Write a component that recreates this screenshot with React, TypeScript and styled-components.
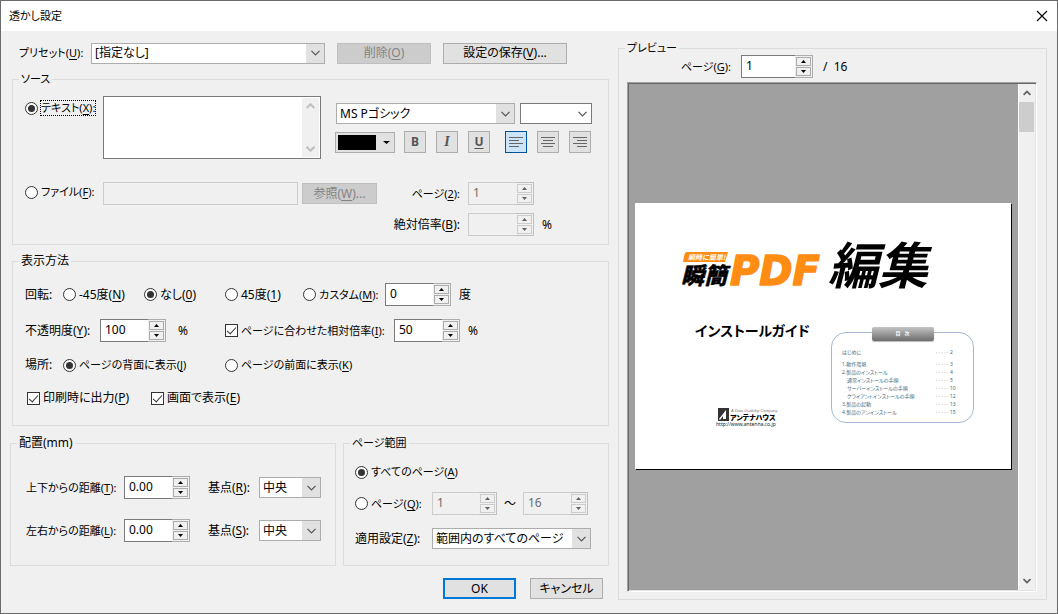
import React from 'react';
import styled, { createGlobalStyle, css } from 'styled-components';

const GlobalStyle = createGlobalStyle`
  *, *::before, *::after { box-sizing: border-box; }
  body { margin: 0; background: #f0f0f0; }
  body, button, input, select, textarea {
    font-family: "Noto Sans", "Noto Sans CJK JP", sans-serif;
    font-size: 12px;
    line-height: 14px;
    color: #000;
    font-feature-settings: "palt";
  }
`;

/* ---------- window ---------- */

const Window = styled.main`
  display: flex;
  flex-direction: column;
  min-height: 100vh;
  border: 1px solid #6b6b6b;
  background: #f0f0f0;
`;

const TitleBar = styled.header`
  display: flex;
  align-items: center;
  justify-content: space-between;
  height: 30px;
  padding: 0 8px;
  background: #fff;
`;

const Title = styled.h1`
  margin: 0;
  font-size: 11px;
  font-weight: 400;
`;

const CloseButton = styled.button`
  display: grid;
  place-items: center;
  width: 14px;
  height: 14px;
  padding: 0;
  border: 0;
  background: none;
`;

const Body = styled.div`
  flex: 1;
  display: grid;
  grid-template-columns: minmax(0, 599fr) minmax(0, 429fr);
  gap: 9px;
  padding: 10px 10px 13px 9px;
`;

const Settings = styled.form`
  display: flex;
  flex-direction: column;
`;

/* ---------- group boxes ---------- */

const Group = styled.fieldset`
  min-width: 0;
  margin: 0;
  padding: 0;
  border: 1px solid #dcdcdc;
`;

const Legend = styled.legend<{ $small?: boolean }>`
  margin-left: 6px;
  padding: 0 2px;
  font-size: ${(p) => (p.$small ? 11 : 12)}px;
`;

const SourceGroup = styled(Group)`
  margin: 8px 0 9px 2px;
`;

const DisplayGroup = styled(Group)`
  margin: 0 0 10px 2px;
`;

const PairedGroups = styled.div`
  display: grid;
  grid-template-columns: minmax(0, 326fr) minmax(0, 266fr);
  gap: 7px;
`;

/* ---------- text and labels ---------- */

const Text = styled.span<{ $small?: boolean }>`
  font-size: ${(p) => (p.$small ? 11 : 12)}px;
  white-space: nowrap;
`;

const FieldLabel = styled.label<{ $small?: boolean; $width?: number; $end?: boolean }>`
  flex: none;
  width: ${(p) => (p.$width ? `${p.$width}px` : 'auto')};
  font-size: ${(p) => (p.$small ? 11 : 12)}px;
  text-align: ${(p) => (p.$end ? 'right' : 'left')};
  white-space: nowrap;
`;

const ChoiceLabel = styled.label<{ $small?: boolean; $width?: number }>`
  display: flex;
  align-items: center;
  flex: none;
  gap: 3px;
  width: ${(p) => (p.$width ? `${p.$width}px` : 'auto')};
  font-size: ${(p) => (p.$small ? 11 : 12)}px;
  white-space: nowrap;
`;

const FocusText = styled.span`
  outline: 1px dotted #000;
`;

const Key = styled.u`
  text-underline-offset: 2px;
`;

/* ---------- controls ---------- */

const Radio = styled.input.attrs({ type: 'radio' })`
  appearance: none;
  display: grid;
  place-items: center;
  flex: none;
  width: 13px;
  height: 13px;
  margin: 0;
  border: 1px solid #333;
  border-radius: 50%;
  background: #fff;
  &:checked::before {
    content: "";
    width: 7px;
    height: 7px;
    border-radius: 50%;
    background: #333;
  }
`;

const CheckBox = styled.input.attrs({ type: 'checkbox' })`
  appearance: none;
  display: grid;
  justify-items: center;
  flex: none;
  width: 13px;
  height: 13px;
  margin: 0;
  border: 1px solid #333;
  background: #fff;
  &:checked::before {
    content: "";
    width: 5px;
    height: 9px;
    border: solid #333;
    border-width: 0 1px 1px 0;
    transform: rotate(42deg);
  }
`;

const Button = styled.button<{ $width: number; $primary?: boolean }>`
  flex: none;
  width: ${(p) => p.$width}px;
  height: 21px;
  padding: 0;
  border: ${(p) => (p.$primary ? '2px solid #0078d7' : '1px solid #adadad')};
  background: #e1e1e1;
  white-space: nowrap;
  &:disabled {
    border-color: #bfbfbf;
    background: #ccc;
    color: #838383;
  }
`;

const SelectFrame = styled.span<{ $width?: number; $plain?: boolean }>`
  display: grid;
  align-items: center;
  flex: ${(p) => (p.$width ? 'none' : '1 1 0')};
  min-width: 0;
  width: ${(p) => (p.$width ? `${p.$width}px` : 'auto')};
  height: 21px;
  padding: 1px;
  border: 1px solid ${(p) => (p.$plain ? '#7a7a7a' : '#adadad')};
  background: ${(p) =>
    p.$plain ? '#fff' : 'linear-gradient(to left, #e1e1e1 18px, #fff 18px)'};
  select, svg { grid-area: 1 / 1; }
  svg { justify-self: end; margin-right: 3px; pointer-events: none; color: #555; }
`;

const SelectInput = styled.select`
  appearance: none;
  width: 100%;
  height: 17px;
  padding: 0 20px 0 2px;
  border: 0;
  border-radius: 0;
  background: none;
`;

const SpinFrame = styled.span<{ $width: number }>`
  display: flex;
  flex: none;
  width: ${(p) => p.$width}px;
  height: 23px;
`;

const SpinInput = styled.input`
  flex: 1;
  min-width: 0;
  padding: 0 0 2px 4px;
  border: 1px solid #7a7a7a;
  border-right: 0;
  border-radius: 0;
  background: #fff;
  &:disabled {
    border-color: #ccc;
    background: #f0f0f0;
    color: #6d6d6d;
  }
`;

const SpinButtons = styled.span<{ $off?: boolean }>`
  display: grid;
  gap: 1px;
  width: 18px;
  padding: 1px;
  border: 1px solid ${(p) => (p.$off ? '#bfbfbf' : '#adadad')};
  border-left: 0;
  background: #f0f0f0;
`;

const SpinButton = styled.button`
  display: grid;
  place-items: center;
  height: 9px;
  padding: 0;
  border: 1px solid #acacac;
  background: #f0f0f0;
  color: #000;
  &:disabled { border-color: #ccc; color: #606060; }
`;

/* ---------- rows ---------- */

const Row = styled.div<{ $height?: number }>`
  display: flex;
  align-items: center;
  height: ${(p) => p.$height ?? 23}px;
`;

const PresetRow = styled(Row)`
  padding: 1px 42px 0 9px;
  gap: 12px;
`;

const LabelledPreset = styled.div`
  display: flex;
  align-items: center;
  flex: 1;
  min-width: 0;
`;

const SourceContent = styled.div`
  display: grid;
  gap: 23px;
  padding: 10px 16px 8px 12px;
`;

const TextSource = styled.div`
  display: flex;
  align-items: flex-start;
`;

const SourceChoice = styled(ChoiceLabel)`
  height: 24px;
`;

const TextAreaFrame = styled.div`
  display: flex;
  flex: 1;
  min-width: 0;
  height: 63px;
  border: 1px solid #7a7a7a;
  background: #fff;
`;

const TextArea = styled.textarea`
  flex: 1;
  min-width: 0;
  padding: 2px 4px;
  border: 0;
  outline: 0;
  resize: none;
  background: none;
`;

const TextAreaScroll = styled.span`
  display: flex;
  flex-direction: column;
  align-items: center;
  justify-content: space-between;
  width: 17px;
  margin: 1px;
  padding: 5px 0;
  background: #f0f0f0;
  color: #bfbfbf;
`;

const FontTools = styled.div`
  display: grid;
  gap: 7px;
  flex: none;
  width: 257px;
  margin: 7px 0 0 14px;
`;

const FontRow = styled.div`
  display: flex;
  gap: 5px;
  padding-left: 1px;
`;

const FormatRow = styled.div`
  display: flex;
  align-items: center;
  padding-right: 1px;
`;

const ToolGroup = styled.div`
  display: flex;
  gap: 10px;
  margin-left: 9px;
  & + & { margin-left: auto; }
`;

const ToolButton = styled.button<{ $active?: boolean }>`
  display: grid;
  place-items: center;
  width: 22px;
  height: 22px;
  padding: 0;
  border: 1px solid ${(p) => (p.$active ? '#00549c' : '#adadad')};
  background: ${(p) => (p.$active ? '#cce4f7' : '#e1e1e1')};
  color: #555;
`;

const Glyph = styled.span<{ $kind: 'bold' | 'italic' | 'underline' }>`
  font-weight: 700;
  ${(p) => p.$kind === 'italic' && css`
    font-family: "Liberation Serif", serif;
    font-size: 14px;
    font-style: italic;
  `}
  ${(p) => p.$kind === 'underline' && css`
    text-decoration: underline;
    text-underline-offset: 2px;
  `}
`;

const ColorButton = styled.button`
  display: flex;
  align-items: center;
  gap: 7px;
  width: 60px;
  height: 21px;
  padding: 0 2px;
  border: 1px solid #adadad;
  background: #e1e1e1;
`;

const Swatch = styled.span`
  width: 38px;
  height: 15px;
  background: #000;
`;

const FileSource = styled.div`
  display: flex;
  align-items: flex-start;
`;

const FileChoice = styled(ChoiceLabel)`
  height: 20px;
`;

const FileInput = styled.input`
  flex: 1;
  min-width: 0;
  height: 23px;
  margin-right: 4px;
  border: 1px solid #ccc;
  background: #f0f0f0;
`;

const BrowseButton = styled(Button)`
  margin-top: 1px;
`;

const FileOptions = styled.div`
  display: grid;
  gap: 8px;
  flex: none;
  width: 215px;
`;

const OptionRow = styled(Row)`
  gap: 8px;
`;

const DisplayContent = styled.div`
  display: grid;
  gap: 13px;
  padding: 15px 12px 17px 12px;
`;

const Unit = styled.span`
  margin-left: 8px;
`;

const OpacityUnit = styled(Unit)`
  flex: none;
  width: 51px;
  padding-left: 4px;
`;

const PlacementContent = styled.div`
  display: grid;
  gap: 20px;
  padding: 26px 14px 23px 15px;
`;

const PlacementRow = styled(Row)`
  justify-content: space-between;
`;

const Pair = styled.div`
  display: flex;
  align-items: center;
`;

const RangeContent = styled.div`
  display: grid;
  gap: 11px;
  padding: 13px 17px 14px 11px;
`;

const Tilde = styled.span`
  flex: none;
  width: 26px;
  text-align: center;
  font-feature-settings: normal;
`;

const Actions = styled.div`
  display: flex;
  justify-content: flex-end;
  gap: 14px;
  padding: 12px 6px 0 0;
`;

/* ---------- preview ---------- */

const PreviewGroup = styled(Group)`
  display: flex;
  flex-direction: column;
`;

const PageRow = styled(Row)`
  gap: 10px;
  flex: none;
`;

const Frame = styled.div`
  display: flex;
  flex: 1;
  margin: 4px 9px 7px 8px;
  border: 1px solid;
  border-color: #a0a0a0 #fff #fff #a0a0a0;
  box-shadow: inset 1px 1px #696969, inset -1px -1px #e3e3e3;
  padding: 1px;
`;

const Canvas = styled.div`
  display: flex;
  align-items: center;
  flex: 1;
  min-width: 0;
  padding: 0 7px 2px 6px;
  background: #a0a0a0;
`;

const Page = styled.article`
  flex: 1;
  min-width: 0;
  min-height: 266px;
  padding: 20px 37px 20px 46px;
  background: #fff;
  box-shadow: 1px 1px #000;
`;

const PageColumns = styled.div`
  display: flex;
  justify-content: space-between;
`;

const Cover = styled.div`
  display: flex;
  flex-direction: column;
  align-items: flex-start;
  justify-content: space-between;
  padding: 16px 0 3px 14px;
  height: 125px;
`;

const GuideTitle = styled.h2`
  margin: 0;
  font-size: 14px;
  font-weight: 700;
  line-height: 18px;
  white-space: nowrap;
`;

const CompanyMark = styled.div`
  display: flex;
  padding-left: 20px;
`;

const Contents = styled.section`
  flex: none;
  width: 143px;
  height: 91px;
  margin-top: 26px;
  border: 1px solid #a3b8d2;
  border-radius: 15px;
`;

const ContentsTitle = styled.h3`
  width: 62px;
  height: 14px;
  margin: -6px auto 7px;
  border-radius: 2px;
  background: linear-gradient(#c4c4c4, #6c6c6c);
  box-shadow: 0 1px 1px #bbb;
  color: #fff;
  font-size: 5px;
  font-weight: 700;
  line-height: 13px;
  text-align: center;
  white-space: pre;
`;

const ContentsList = styled.ul`
  margin: 0;
  padding: 0 15px 0 10px;
  list-style: none;
`;

const ContentsItem = styled.li<{ $nested?: boolean; $apart?: boolean }>`
  display: flex;
  justify-content: space-between;
  margin-bottom: ${(p) => (p.$apart ? 4 : 0)}px;
  padding-left: ${(p) => (p.$nested ? 5 : 0)}px;
  color: #3f6b7c;
  font-size: 5px;
  line-height: 8px;
  white-space: nowrap;
`;

const PageNumber = styled.span`
  display: grid;
  grid-template-columns: 14px 8px;
`;

const ScrollBar = styled.div`
  display: flex;
  flex-direction: column;
  width: 17px;
  padding: 0 1px 0 0;
  border-left: 1px solid #fff;
  background: #f0f0f0;
`;

const ScrollArrow = styled.button`
  display: grid;
  place-items: center;
  height: 18px;
  padding: 0;
  border: 0;
  background: none;
  color: #606060;
`;

const ScrollTrack = styled.div`
  flex: 1;
`;

const ScrollThumb = styled.div`
  height: 30px;
  background: #cdcdcd;
`;

/* ---------- icons ---------- */

const Chevron = ({ up, bold, size = 9 }: { up?: boolean; bold?: boolean; size?: number }) => (
  <svg width={size} height="6" viewBox="0 0 9 6" fill="none" stroke="currentColor" strokeWidth={bold ? 2 : 1.2}>
    <path d={up ? 'M.7 5 4.5 1.2 8.3 5' : 'M.5.8 4.5 4.8 8.5.8'} />
  </svg>
);

const Triangle = ({ up, size = 5 }: { up?: boolean; size?: number }) => (
  <svg width={size} height="3" viewBox="0 0 5 3" preserveAspectRatio="none" fill="currentColor">
    <path d={up ? 'M0 3 2.5 0 5 3Z' : 'M0 0 2.5 3 5 0Z'} />
  </svg>
);

const AlignIcon = ({ kind }: { kind: 'left' | 'center' | 'right' }) => {
  const short = { left: [0, 10], center: [2, 12], right: [4, 14] }[kind];
  return (
    <svg width="14" height="11" viewBox="0 0 14 11" stroke="#666">
      {[0, 1, 2, 3].map((i) => {
        const [a, b] = i % 2 ? short : [0, 14];
        return <path key={i} d={`M${a} ${i * 3 + 0.5}H${b}`} />;
      })}
    </svg>
  );
};

const ProductLogo = () => (
  <svg width="270" height="80" viewBox="0 -14 270 80" role="img" aria-label="瞬簡PDF 編集">
    <path d="M6 15h41l-3 10H2l1-6q1-4 3-4Z" fill="#ff8c13" />
    <text x="7" y="23" fontSize="7" fontWeight="700" fontStyle="italic" fill="#fff" fontFamily="Noto Sans CJK JP">瞬時に簡単!</text>
    <text x="0" y="47" fontSize="23" fontWeight="900" fontStyle="italic" stroke="#000" strokeWidth="0.4" fontFamily="Noto Sans CJK JP">瞬簡</text>
    <text x="49" y="48" fontSize="40" fontWeight="700" fontStyle="italic" fill="#ff8c13" stroke="#ff8c13" strokeWidth="1.5" strokeLinejoin="round" fontFamily="DejaVu Sans">PDF</text>
    <text x="147" y="47" fontSize="50" fontWeight="700" fontStyle="italic" fontFamily="Noto Sans CJK JP">編集</text>
  </svg>
);

const CompanyLogo = () => (
  <svg width="66" height="22" viewBox="0 -1 66 22" role="img" aria-label="アンテナハウス">
    <path d="M3 1h11v13H3Z" fill="#333" />
    <path d="m4 12 7-9v9H8V9l-3 4Z" fill="#fff" />
    <text x="16" y="5" fontSize="4" fontStyle="italic" fill="#777" fontFamily="Liberation Sans">A Data Usability Company</text>
    <text x="15" y="13" fontSize="7" fontWeight="900" fontFamily="Noto Sans CJK JP">アンテナハウス</text>
    <text x="1" y="19" fontSize="5" fill="#222" fontFamily="Noto Sans">http://www.antenna.co.jp</text>
  </svg>
);

/* ---------- composed controls ---------- */

type SpinProps = { id: string; value: string; width?: number; disabled?: boolean; label?: string };

const Spin = ({ id, value, width = 66, disabled, label }: SpinProps) => (
  <SpinFrame $width={width}>
    <SpinInput id={id} defaultValue={value} disabled={disabled} aria-label={label} />
    <SpinButtons $off={disabled}>
      <SpinButton type="button" disabled={disabled} aria-label="増やす"><Triangle up /></SpinButton>
      <SpinButton type="button" disabled={disabled} aria-label="減らす"><Triangle /></SpinButton>
    </SpinButtons>
  </SpinFrame>
);

type SelectProps = { id: string; value: string; width?: number; plain?: boolean; label?: string };

const Select = ({ id, value, width, plain, label }: SelectProps) => (
  <SelectFrame $width={width} $plain={plain}>
    <SelectInput id={id} aria-label={label}>
      <option>{value}</option>
    </SelectInput>
    <Chevron />
  </SelectFrame>
);

const contents = [
  { text: 'はじめに', page: 2, apart: true },
  { text: '1.動作環境', page: 3 },
  { text: '2.製品のインストール', page: 4 },
  { text: '通常インストールの手順', page: 5, nested: true },
  { text: 'サーバーインストールの手順', page: 10, nested: true },
  { text: 'クライアントインストールの手順', page: 12, nested: true },
  { text: '3.製品の起動', page: 13 },
  { text: '4.製品のアンインストール', page: 15 },
];

export default function App() {
  return (
    <>
      <GlobalStyle />
      <Window>
        <TitleBar>
          <Title>透かし設定</Title>
          <CloseButton aria-label="閉じる">
            <svg width="12" height="12" viewBox="0 0 12 12" stroke="#000" strokeWidth="1.1">
              <path d="m1 1 10 10M11 1 1 11" />
            </svg>
          </CloseButton>
        </TitleBar>
        <Body>
          <Settings onSubmit={(e) => e.preventDefault()}>
            <PresetRow>
              <LabelledPreset>
                <FieldLabel htmlFor="preset" $small $width={72}>プリセット(<Key>U</Key>):</FieldLabel>
                <Select id="preset" value="[指定なし]" />
              </LabelledPreset>
              <Button type="button" $width={94} disabled>削除(<Key>O</Key>)</Button>
              <Button type="button" $width={124}>設定の保存(<Key>V</Key>)...</Button>
            </PresetRow>

            <SourceGroup>
              <Legend $small>ソース</Legend>
              <SourceContent>
                <TextSource>
                  <SourceChoice $small $width={78}>
                    <Radio name="source" defaultChecked />
                    <FocusText>テキスト(<Key>X</Key>):</FocusText>
                  </SourceChoice>
                  <TextAreaFrame>
                    <TextArea aria-label="透かしテキスト" />
                    <TextAreaScroll><Chevron up bold /><Chevron bold /></TextAreaScroll>
                  </TextAreaFrame>
                  <FontTools>
                    <FontRow>
                      <Select id="font" label="フォント" value="MS Pゴシック" />
                      <Select id="size" label="サイズ" value="" width={72} plain />
                    </FontRow>
                    <FormatRow>
                      <ColorButton type="button" aria-label="文字色"><Swatch /><Triangle size={7} /></ColorButton>
                      <ToolGroup>
                        <ToolButton type="button"><Glyph $kind="bold">B</Glyph></ToolButton>
                        <ToolButton type="button"><Glyph $kind="italic">I</Glyph></ToolButton>
                        <ToolButton type="button"><Glyph $kind="underline">U</Glyph></ToolButton>
                      </ToolGroup>
                      <ToolGroup>
                        <ToolButton type="button" $active aria-label="左揃え"><AlignIcon kind="left" /></ToolButton>
                        <ToolButton type="button" aria-label="中央揃え"><AlignIcon kind="center" /></ToolButton>
                        <ToolButton type="button" aria-label="右揃え"><AlignIcon kind="right" /></ToolButton>
                      </ToolGroup>
                    </FormatRow>
                  </FontTools>
                </TextSource>
                <FileSource>
                  <FileChoice $small $width={78}>
                    <Radio name="source" />
                    <span>ファイル(<Key>F</Key>):</span>
                  </FileChoice>
                  <FileInput disabled aria-label="ファイル名" />
                  <BrowseButton type="button" $width={75} disabled>参照(<Key>W</Key>)...</BrowseButton>
                  <FileOptions>
                    <OptionRow>
                      <FieldLabel htmlFor="filePage" $small $width={83} $end>ページ(<Key>2</Key>):</FieldLabel>
                      <Spin id="filePage" value="1" disabled />
                    </OptionRow>
                    <OptionRow>
                      <FieldLabel htmlFor="scale" $width={83} $end>絶対倍率(<Key>B</Key>):</FieldLabel>
                      <Spin id="scale" value="" disabled />
                      <Text>%</Text>
                    </OptionRow>
                  </FileOptions>
                </FileSource>
              </SourceContent>
            </SourceGroup>

            <DisplayGroup>
              <Legend>表示方法</Legend>
              <DisplayContent>
                <Row>
                  <FieldLabel as="span" $width={38}>回転:</FieldLabel>
                  <ChoiceLabel $width={81}><Radio name="rotate" /><span>-45度(<Key>N</Key>)</span></ChoiceLabel>
                  <ChoiceLabel $width={81}><Radio name="rotate" defaultChecked /><span>なし(<Key>0</Key>)</span></ChoiceLabel>
                  <ChoiceLabel $width={78}><Radio name="rotate" /><span>45度(<Key>1</Key>)</span></ChoiceLabel>
                  <ChoiceLabel $small $width={82}><Radio name="rotate" /><span>カスタム(<Key>M</Key>):</span></ChoiceLabel>
                  <Spin id="angle" label="角度" value="0" />
                  <Unit>度</Unit>
                </Row>
                <Row>
                  <FieldLabel htmlFor="opacity" $width={75}>不透明度(<Key>Y</Key>):</FieldLabel>
                  <Spin id="opacity" value="100" />
                  <OpacityUnit>%</OpacityUnit>
                  <ChoiceLabel $small $width={169}>
                    <CheckBox defaultChecked />
                    <span>ページに合わせた相対倍率(<Key>I</Key>):</span>
                  </ChoiceLabel>
                  <Spin id="relative" label="相対倍率" value="50" />
                  <Unit>%</Unit>
                </Row>
                <Row $height={20}>
                  <FieldLabel as="span" $width={38}>場所:</FieldLabel>
                  <ChoiceLabel $small $width={162}><Radio name="layer" defaultChecked /><span>ページの背面に表示(<Key>J</Key>)</span></ChoiceLabel>
                  <ChoiceLabel $small><Radio name="layer" /><span>ページの前面に表示(<Key>K</Key>)</span></ChoiceLabel>
                </Row>
                <Row $height={20}>
                  <FieldLabel as="span" $width={2} />
                  <ChoiceLabel $width={124}><CheckBox defaultChecked /><span>印刷時に出力(<Key>P</Key>)</span></ChoiceLabel>
                  <ChoiceLabel><CheckBox defaultChecked /><span>画面で表示(<Key>E</Key>)</span></ChoiceLabel>
                </Row>
              </DisplayContent>
            </DisplayGroup>

            <PairedGroups>
              <Group>
                <Legend>配置(mm)</Legend>
                <PlacementContent>
                  <PlacementRow>
                    <Pair>
                      <FieldLabel htmlFor="vertical" $small $width={98}>上下からの距離(<Key>T</Key>):</FieldLabel>
                      <Spin id="vertical" value="0.00" />
                    </Pair>
                    <Pair>
                      <FieldLabel htmlFor="baseV" $width={51}>基点(<Key>R</Key>):</FieldLabel>
                      <Select id="baseV" value="中央" width={62} />
                    </Pair>
                  </PlacementRow>
                  <PlacementRow>
                    <Pair>
                      <FieldLabel htmlFor="horizontal" $small $width={98}>左右からの距離(<Key>L</Key>):</FieldLabel>
                      <Spin id="horizontal" value="0.00" />
                    </Pair>
                    <Pair>
                      <FieldLabel htmlFor="baseH" $width={51}>基点(<Key>S</Key>):</FieldLabel>
                      <Select id="baseH" value="中央" width={62} />
                    </Pair>
                  </PlacementRow>
                </PlacementContent>
              </Group>
              <Group>
                <Legend $small>ページ範囲</Legend>
                <RangeContent>
                  <Row $height={18}>
                    <ChoiceLabel $small><Radio name="range" defaultChecked /><span>すべてのページ(<Key>A</Key>)</span></ChoiceLabel>
                  </Row>
                  <Row>
                    <ChoiceLabel $small $width={77}><Radio name="range" /><span>ページ(<Key>Q</Key>):</span></ChoiceLabel>
                    <Spin id="from" label="開始ページ" value="1" width={65} disabled />
                    <Tilde>～</Tilde>
                    <Spin id="to" label="終了ページ" value="16" width={65} disabled />
                  </Row>
                  <Row $height={25}>
                    <FieldLabel htmlFor="apply" $width={77}>適用設定(<Key>Z</Key>):</FieldLabel>
                    <Select id="apply" value="範囲内のすべてのページ" width={159} />
                  </Row>
                </RangeContent>
              </Group>
            </PairedGroups>

            <Actions>
              <Button type="submit" $width={73} $primary>OK</Button>
              <Button type="button" $width={73}>キャンセル</Button>
            </Actions>
          </Settings>

          <PreviewGroup>
            <Legend $small>プレビュー</Legend>
            <PageRow>
              <FieldLabel htmlFor="previewPage" $small $width={112} $end>ページ(<Key>G</Key>):</FieldLabel>
              <Spin id="previewPage" value="1" width={72} />
              <Text>/&nbsp; 16</Text>
            </PageRow>
            <Frame>
              <Canvas>
                <Page>
                  <ProductLogo />
                  <PageColumns>
                    <Cover>
                      <GuideTitle>インストールガイド</GuideTitle>
                      <CompanyMark><CompanyLogo /></CompanyMark>
                    </Cover>
                    <Contents>
                      <ContentsTitle>目   次</ContentsTitle>
                      <ContentsList>
                        {contents.map((item) => (
                          <ContentsItem key={item.text} $nested={item.nested} $apart={item.apart}>
                            <span>{item.text}</span>
                            <PageNumber><span>· · · · ·</span><span>{item.page}</span></PageNumber>
                          </ContentsItem>
                        ))}
                      </ContentsList>
                    </Contents>
                  </PageColumns>
                </Page>
              </Canvas>
              <ScrollBar>
                <ScrollArrow type="button" aria-label="上へ"><Chevron up bold size={8} /></ScrollArrow>
                <ScrollTrack><ScrollThumb /></ScrollTrack>
                <ScrollArrow type="button" aria-label="下へ"><Chevron bold size={8} /></ScrollArrow>
              </ScrollBar>
            </Frame>
          </PreviewGroup>
        </Body>
      </Window>
    </>
  );
}
